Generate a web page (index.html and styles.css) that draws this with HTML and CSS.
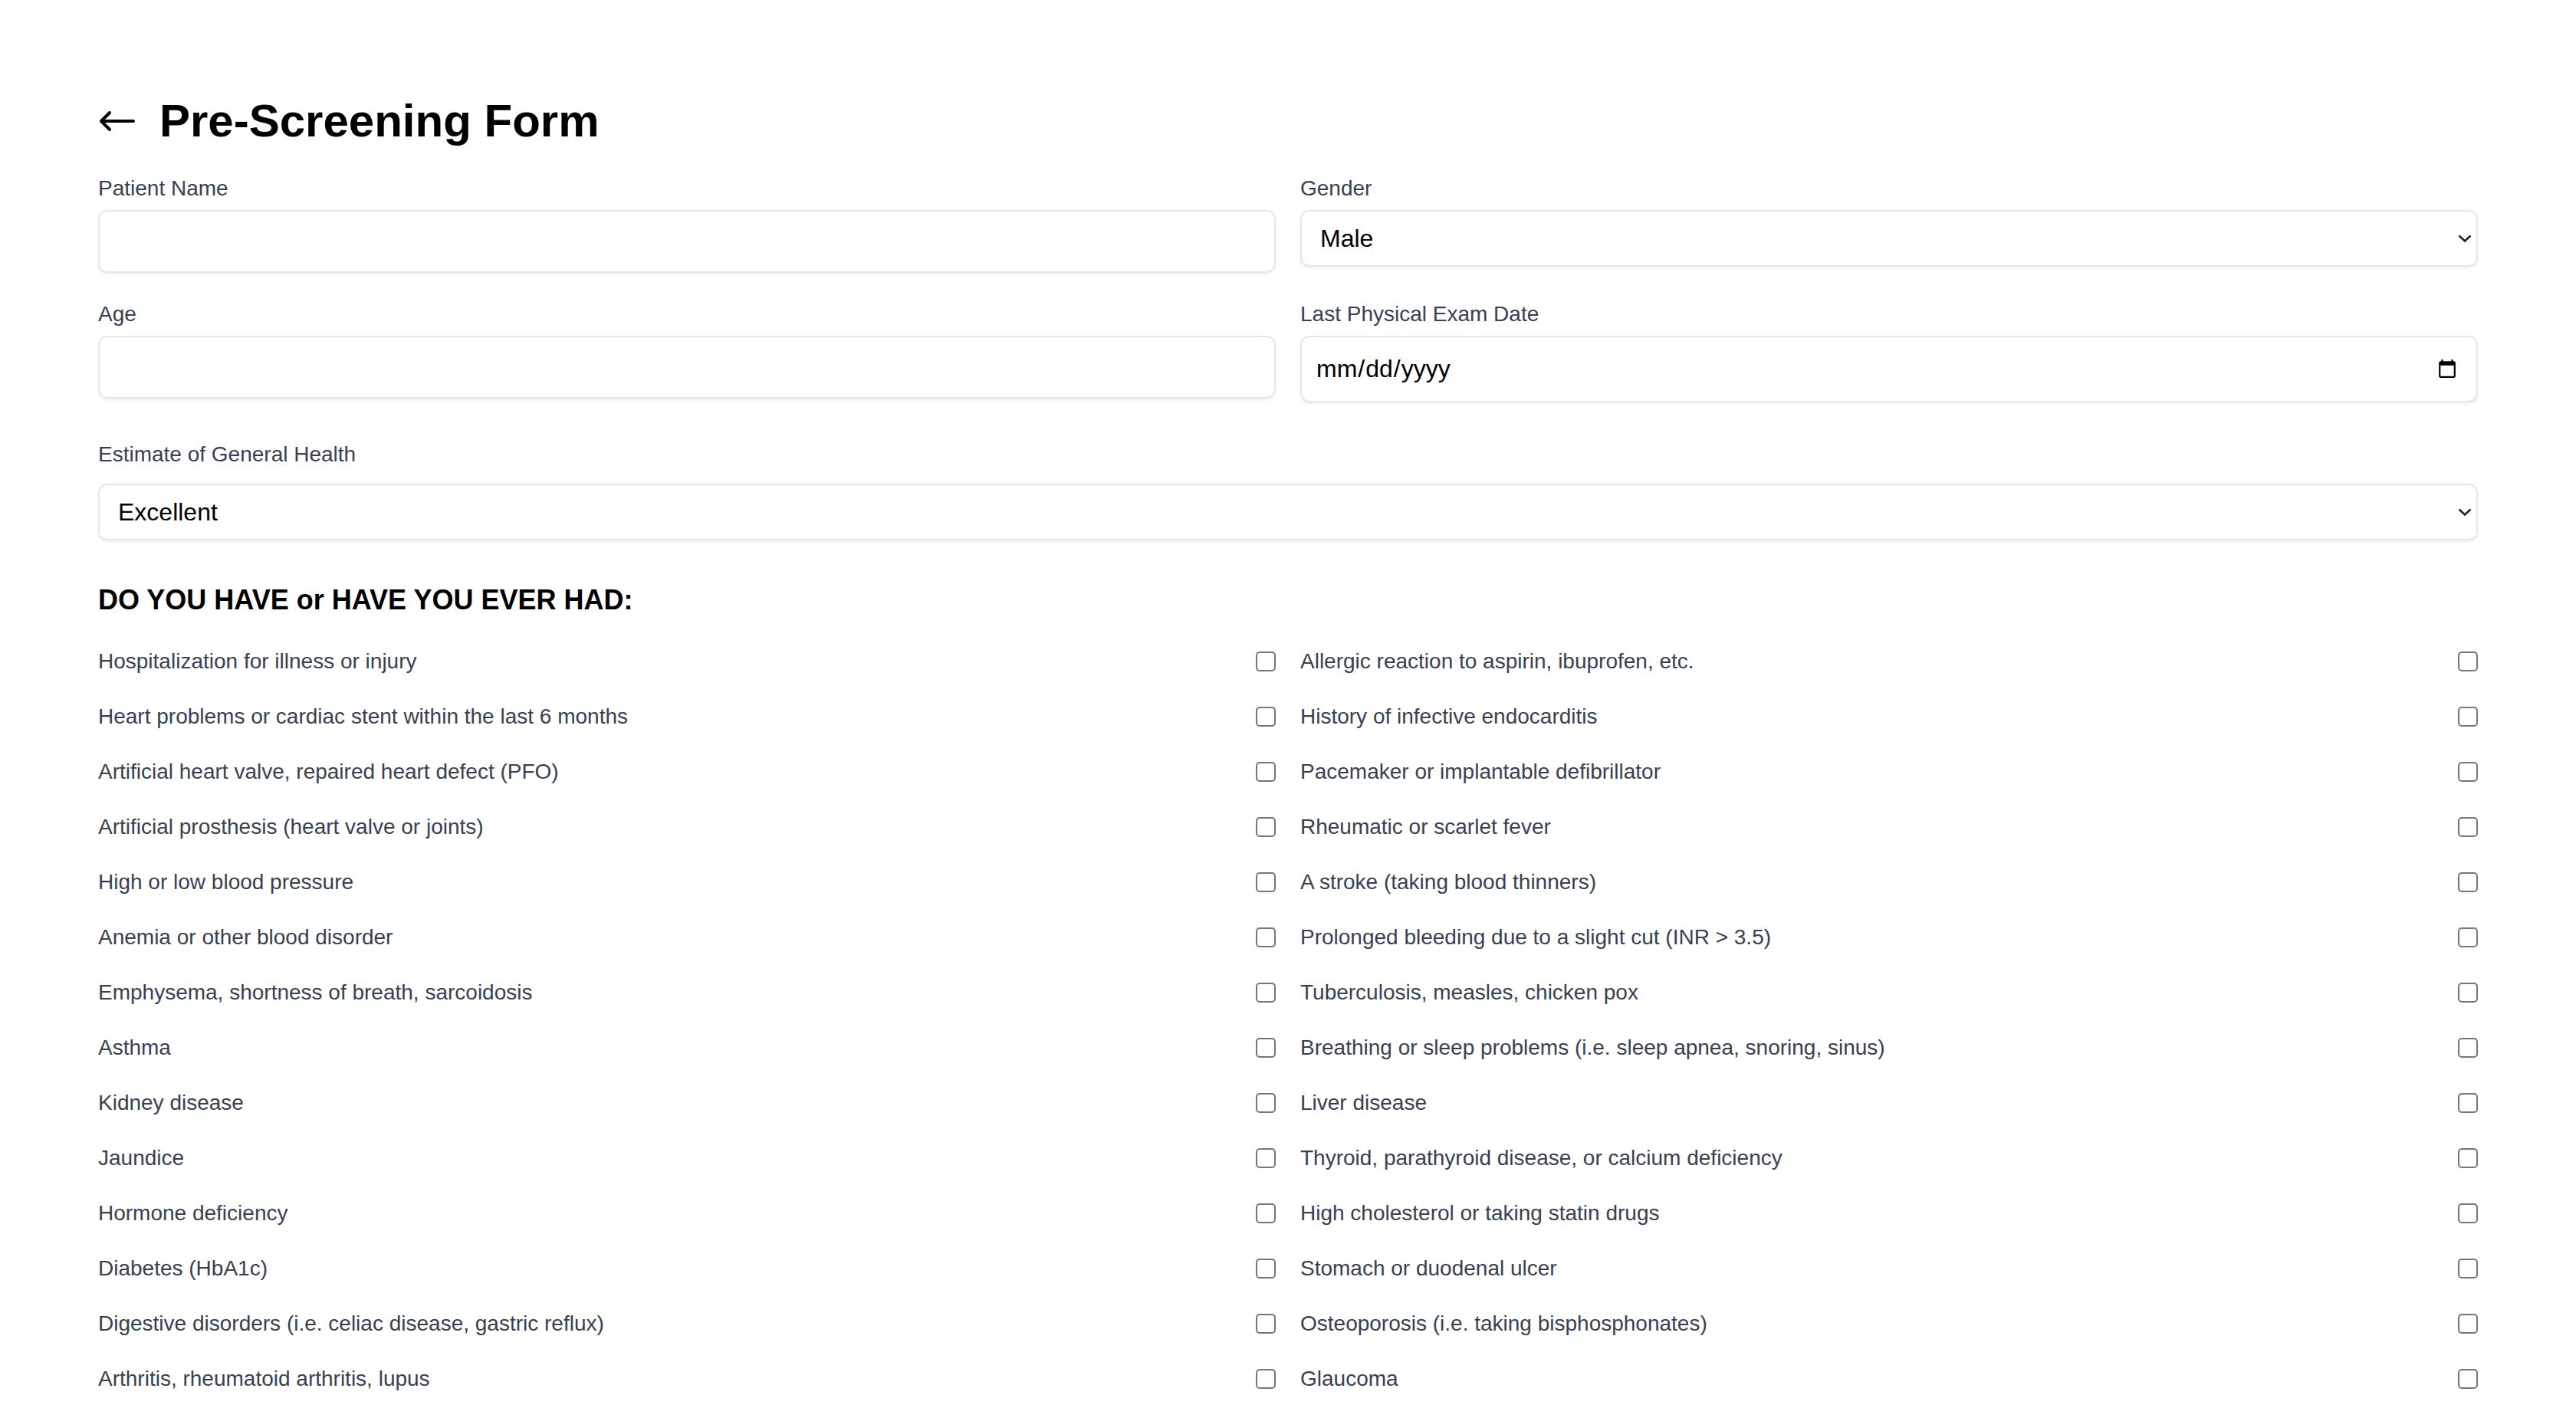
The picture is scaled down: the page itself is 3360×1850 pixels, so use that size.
FILE: index.html
```html
<!DOCTYPE html>
<html lang="en">

<head>
    <meta charset="UTF-8">
    <meta name="viewport" content="width=device-width, initial-scale=1.0">
    <link rel="stylesheet" href="styles.css">
    <title>Pre-Screening Form</title>
</head>

<body>
    <div class="page">
        <div class="header">
            <a class="back" href="#">
                <svg width="48" height="30" viewBox="0 0 48 30">
                    <path d="M46 15H4M15 4L4 15l11 11" fill="none" stroke="#000" stroke-width="4" stroke-linecap="round" stroke-linejoin="round"/>
                </svg>
            </a>
            <h1 class="title">Pre-Screening Form</h1>
        </div>

        <div class="grid">
            <div class="field">
                <label class="label">Patient Name</label>
                <input class="text-input" type="text">
            </div>
            <div class="field">
                <label class="label">Gender</label>
                <div class="select-wrap">
                    <select class="select-input">
                        <option>Male</option>
                        <option>Female</option>
                        <option>Other</option>
                    </select>
                    <svg class="chevron" width="18" height="10" viewBox="0 0 18 10">
                        <path d="M1.5 1.5L9 8.5l7.5-7" fill="none" stroke="#222" stroke-width="2.6"/>
                    </svg>
                </div>
            </div>
            <div class="field">
                <label class="label">Age</label>
                <input class="text-input" type="number">
            </div>
            <div class="field">
                <label class="label">Last Physical Exam Date</label>
                <input class="text-input date-input" type="date">
            </div>
        </div>

        <div class="field health">
            <label class="label">Estimate of General Health</label>
            <div class="select-wrap">
                <select class="select-input">
                    <option>Excellent</option>
                    <option>Good</option>
                    <option>Fair</option>
                    <option>Poor</option>
                </select>
                <svg class="chevron" width="18" height="10" viewBox="0 0 18 10">
                    <path d="M1.5 1.5L9 8.5l7.5-7" fill="none" stroke="#222" stroke-width="2.6"/>
                </svg>
            </div>
        </div>

        <h3 class="section-title">DO YOU HAVE or HAVE YOU EVER HAD:</h3>

        <div class="checklist">
            <label class="check-row"><span>Hospitalization for illness or injury</span><input type="checkbox"></label>
            <label class="check-row"><span>Allergic reaction to aspirin, ibuprofen, etc.</span><input type="checkbox"></label>
            <label class="check-row"><span>Heart problems or cardiac stent within the last 6 months</span><input type="checkbox"></label>
            <label class="check-row"><span>History of infective endocarditis</span><input type="checkbox"></label>
            <label class="check-row"><span>Artificial heart valve, repaired heart defect (PFO)</span><input type="checkbox"></label>
            <label class="check-row"><span>Pacemaker or implantable defibrillator</span><input type="checkbox"></label>
            <label class="check-row"><span>Artificial prosthesis (heart valve or joints)</span><input type="checkbox"></label>
            <label class="check-row"><span>Rheumatic or scarlet fever</span><input type="checkbox"></label>
            <label class="check-row"><span>High or low blood pressure</span><input type="checkbox"></label>
            <label class="check-row"><span>A stroke (taking blood thinners)</span><input type="checkbox"></label>
            <label class="check-row"><span>Anemia or other blood disorder</span><input type="checkbox"></label>
            <label class="check-row"><span>Prolonged bleeding due to a slight cut (INR &gt; 3.5)</span><input type="checkbox"></label>
            <label class="check-row"><span>Emphysema, shortness of breath, sarcoidosis</span><input type="checkbox"></label>
            <label class="check-row"><span>Tuberculosis, measles, chicken pox</span><input type="checkbox"></label>
            <label class="check-row"><span>Asthma</span><input type="checkbox"></label>
            <label class="check-row"><span>Breathing or sleep problems (i.e. sleep apnea, snoring, sinus)</span><input type="checkbox"></label>
            <label class="check-row"><span>Kidney disease</span><input type="checkbox"></label>
            <label class="check-row"><span>Liver disease</span><input type="checkbox"></label>
            <label class="check-row"><span>Jaundice</span><input type="checkbox"></label>
            <label class="check-row"><span>Thyroid, parathyroid disease, or calcium deficiency</span><input type="checkbox"></label>
            <label class="check-row"><span>Hormone deficiency</span><input type="checkbox"></label>
            <label class="check-row"><span>High cholesterol or taking statin drugs</span><input type="checkbox"></label>
            <label class="check-row"><span>Diabetes (HbA1c)</span><input type="checkbox"></label>
            <label class="check-row"><span>Stomach or duodenal ulcer</span><input type="checkbox"></label>
            <label class="check-row"><span>Digestive disorders (i.e. celiac disease, gastric reflux)</span><input type="checkbox"></label>
            <label class="check-row"><span>Osteoporosis (i.e. taking bisphosphonates)</span><input type="checkbox"></label>
            <label class="check-row"><span>Arthritis, rheumatoid arthritis, lupus</span><input type="checkbox"></label>
            <label class="check-row"><span>Glaucoma</span><input type="checkbox"></label>
        </div>
    </div>
</body>

</html>
```

FILE: styles.css
```css
body {
  margin: 0;
  background: #ffffff;
}

.page,
.page * {
  font-family: "Liberation Sans", Arial, sans-serif;
}

.page {
  padding: 122px 128px 64px;
}

.header {
  display: flex;
  align-items: center;
  gap: 32px;
  margin-bottom: 32px;
}

.back {
  display: flex;
  align-items: center;
  text-decoration: none;
}

.title {
  margin: 0;
  font-size: 60px;
  line-height: 72px;
  font-weight: bold;
  color: #000000;
}

.grid {
  display: grid;
  grid-template-columns: 1fr 1fr;
  column-gap: 32px;
  row-gap: 34px;
  margin-bottom: 48px;
}

.label {
  display: block;
  margin-bottom: 8px;
  font-size: 28px;
  line-height: 40px;
  color: #374151;
}

.health .label {
  margin-bottom: 18px;
}

.text-input,
.select-input {
  display: block;
  width: 100%;
  box-sizing: border-box;
  border: 2px solid #e5e7eb;
  border-radius: 12px;
  box-shadow: 0 2px 4px rgba(0, 0, 0, 0.06);
  background: #ffffff;
  color: #000000;
  font-size: 32px;
  outline: none;
}

.text-input {
  height: 82px;
  padding: 0 20px;
}

.date-input {
  height: 87px;
  padding: 0 18px;
}

.date-input::-webkit-calendar-picker-indicator {
  width: 28px;
  height: 28px;
  margin-right: 4px;
}

.select-wrap {
  position: relative;
}

.select-input {
  appearance: none;
  height: 74px;
  padding: 0 48px 0 24px;
}

.chevron {
  position: absolute;
  right: 8px;
  top: 32px;
  pointer-events: none;
}

.section-title {
  margin: 50px 0 16px;
  font-size: 36px;
  line-height: 56px;
  font-weight: bold;
  color: #000000;
}

.checklist {
  display: grid;
  grid-template-columns: 1fr 1fr;
  column-gap: 32px;
}

.check-row {
  display: flex;
  align-items: center;
  justify-content: space-between;
  height: 72px;
  font-size: 28px;
  color: #374151;
}

.check-row input {
  appearance: none;
  width: 26px;
  height: 26px;
  margin: 0;
  border: 2px solid #767676;
  border-radius: 5px;
  background: #ffffff;
}
```
